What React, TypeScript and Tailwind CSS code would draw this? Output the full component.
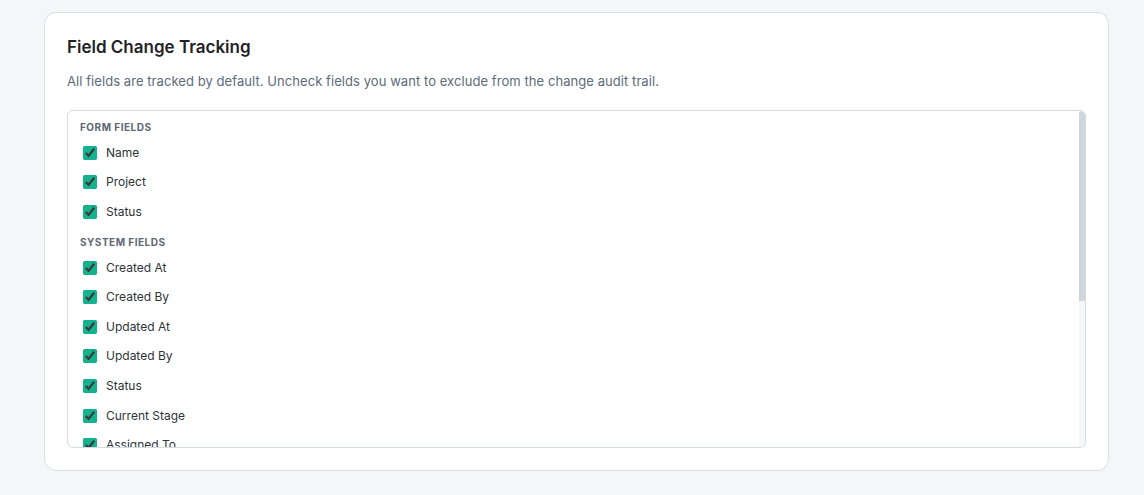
const FORM_FIELDS = ['Name', 'Project', 'Status'];
const SYSTEM_FIELDS = [
  'Created At',
  'Created By',
  'Updated At',
  'Updated By',
  'Status',
  'Current Stage',
  'Assigned To',
  'Due Date',
  'Priority',
];

function FieldRow({ label }: { label: string }) {
  return (
    <label className="flex h-[29.6px] items-center gap-[9px] pl-[3px] text-[12px] text-[#2d3339]">
      <input
        type="checkbox"
        defaultChecked
        className="m-0 h-[14px] w-[14px] shrink-0 accent-[#14b38f]"
      />
      <span>{label}</span>
    </label>
  );
}

function Section({ title, fields, first }: { title: string; fields: string[]; first?: boolean }) {
  return (
    <div className={first ? '' : 'mt-2'}>
      <div className="mb-1 text-[10px] font-bold uppercase leading-[14px] tracking-[0.05em] text-[#5d6873]">
        {title}
      </div>
      {fields.map((f, i) => (
        <FieldRow key={title + i} label={f} />
      ))}
    </div>
  );
}

export default function App() {
  return (
    <div
      className="min-h-[495px] bg-[#f5f6f8] pt-[12px] pl-[44px]"
      style={{ fontFamily: 'Inter, "Noto Sans", sans-serif' }}
    >
      <div className="w-[1065px] rounded-xl border border-[#d8e0e5] bg-white px-[22px] pt-[22px] pb-[22px]">
        <h2 className="text-[17px] font-semibold leading-6 text-[#1f2328]">Field Change Tracking</h2>
        <p className="mt-3 text-[13px] leading-5 tracking-[0.005em] text-[#5b6b7a]">
          All fields are tracked by default. Uncheck fields you want to exclude from the change audit trail.
        </p>
        <div className="mt-[19px] flex h-[338px] overflow-hidden rounded-md border border-[#d2dbe0]">
          <div className="flex-1 overflow-hidden px-3 pt-[9px]">
            <Section title="Form Fields" fields={FORM_FIELDS} first />
            <Section title="System Fields" fields={SYSTEM_FIELDS} />
          </div>
          <div className="flex w-[6px] flex-col bg-[#f4f6f8]">
            <div className="h-[190px] rounded-t-sm rounded-b-[1px] bg-[#cdd6dc]" />
          </div>
        </div>
      </div>
    </div>
  );
}
